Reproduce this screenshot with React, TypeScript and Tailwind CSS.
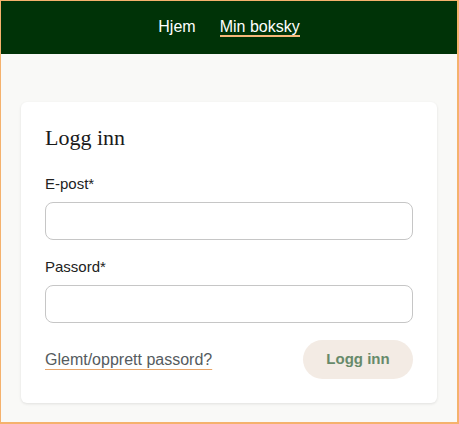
export default function App() {
  return (
    <div
      className="h-[424px] border-t border-l border-r-2 border-b-2 border-[#f5b26d] bg-[#f9f9f7] flex flex-col"
      style={{ fontFamily: '"Liberation Sans", Arial, sans-serif' }}
    >
      {/* Header */}
      <header className="h-[53px] bg-[#003307] flex items-center justify-center gap-6 text-white text-base">
        <a href="#" className="leading-4 pb-[2px]">Hjem</a>
        <a href="#" className="leading-4 border-b-2 border-[#f7b77a]">Min boksky</a>
      </header>

      {/* Main */}
      <main className="pl-5 pr-5 pt-12">
        <div className="bg-white rounded-md shadow-[0_1px_3px_rgba(0,0,0,0.1)] px-6 pt-[23px] pb-6">
          <h1
            className="text-[22px] leading-[25px] text-[#1a1a1a]"
            style={{ fontFamily: '"Liberation Serif", "Times New Roman", serif' }}
          >
            Logg inn
          </h1>

          <form className="mt-6 flex flex-col">
            <label className="text-[15px] leading-5 text-[#222]">E-post*</label>
            <input
              type="email"
              className="mt-2 h-[38px] rounded-lg border border-[#c6c6c6] bg-white px-3 outline-none"
            />

            <label className="mt-[17px] text-[15px] leading-5 text-[#222]">Passord*</label>
            <input
              type="password"
              className="mt-2 h-[38px] rounded-lg border border-[#c6c6c6] bg-white px-3 outline-none"
            />

            <div className="mt-[17px] flex items-center justify-between">
              <a
                href="#"
                className="text-base text-[#555b5e] underline decoration-[#e8a66a] underline-offset-4"
              >
                Glemt/opprett passord?
              </a>
              <button
                type="button"
                className="h-[39px] w-[110px] rounded-full bg-[#f3ebe4] text-[15px] font-bold text-[#678a6a]"
              >
                Logg inn
              </button>
            </div>
          </form>
        </div>
      </main>
    </div>
  )
}
